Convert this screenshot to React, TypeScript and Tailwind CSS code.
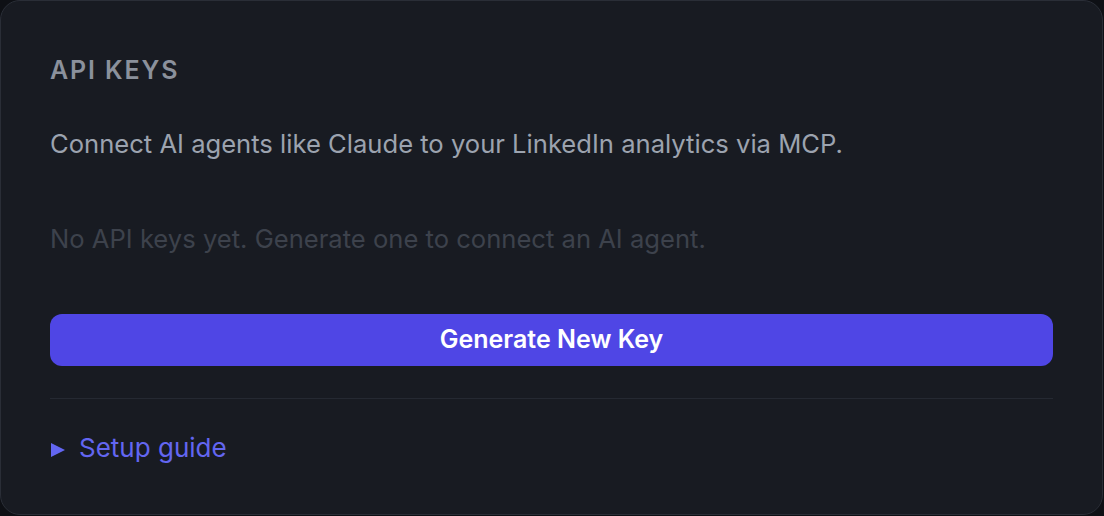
export default function App() {
  return (
    <div className="min-h-[516px] w-[1104px] bg-[#0e1015] font-['Inter',sans-serif]">
      <div className="w-[1103px] h-[515px] rounded-[20px] border-[1.5px] border-[#2a2e37] bg-[#181b22] px-[49px] pt-[54px]">
        <h2 className="text-[25px] leading-[30px] font-semibold tracking-[0.075em] text-[#8b919c]">
          API KEYS
        </h2>
        <p className="mt-[43px] text-[25.6px] leading-[32px] text-[#9ca3af]">
          Connect AI agents like Claude to your LinkedIn analytics via MCP.
        </p>
        <p className="mt-[63px] text-[25.6px] leading-[32px] text-[#3d424c]">
          No API keys yet. Generate one to connect an AI agent.
        </p>
        <button className="mt-[59px] w-full h-[52px] rounded-[12px] bg-[#4f46e5] text-white text-[25px] font-semibold">
          Generate New Key
        </button>
        <div className="mt-[32px] border-t-[1.5px] border-[#252932]" />
        <div className="mt-[33px] flex items-center gap-[14px] text-[#6366f1]">
          <svg width="14" height="14" viewBox="0 0 14 14" className="ml-[1px] mt-[4px]">
            <path d="M0 0 L14 7 L0 14 Z" fill="currentColor" />
          </svg>
          <span className="text-[26px] leading-[32px]">Setup guide</span>
        </div>
      </div>
    </div>
  );
}
